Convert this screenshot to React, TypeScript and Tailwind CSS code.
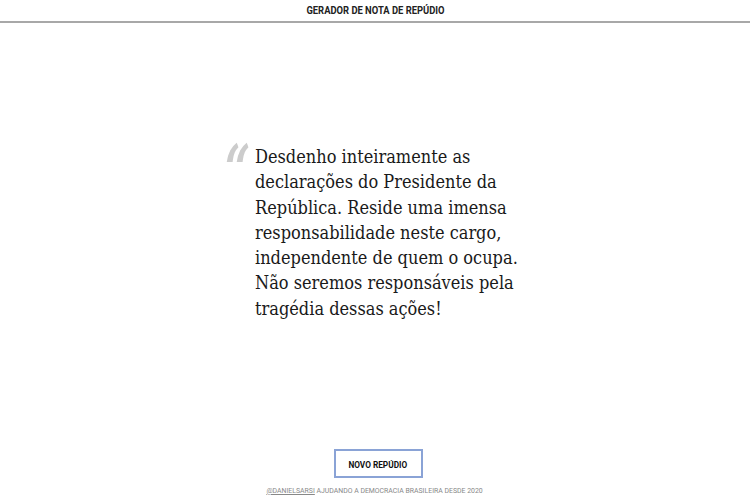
import React from "react";

const sans = { fontFamily: "Roboto, 'Liberation Sans', sans-serif" } as React.CSSProperties;
const serif = { fontFamily: "'DejaVu Serif Condensed', 'DejaVu Serif', serif", fontStretch: "semi-condensed" } as React.CSSProperties;
const quote = { fontFamily: "'DejaVu Serif', serif" } as React.CSSProperties;

export default function App() {
  return (
    <div className="w-[750px] h-[500px] bg-white flex flex-col" style={sans}>
      <header className="h-[23px] shrink-0 flex items-center justify-center border-b-2 border-[#a8a8a8]">
        <h1 className="inline-block scale-x-[0.94] text-[10px] font-bold text-[#222] leading-none pt-[1px]">GERADOR DE NOTA DE REPÚDIO</h1>
      </header>
      <main className="flex-1 flex items-start justify-center pt-[121px]">
        <div className="flex w-[302px]">
          <div className="w-[31px] shrink-0 relative">
            <span className="absolute left-[1px] top-[-8px] origin-top-left scale-x-[0.88] scale-y-[1.35] text-[#cccccc] text-[50px] leading-none font-bold italic" style={quote}>“</span>
          </div>
          <p className="w-[271px] text-[18px] leading-[25.3px] text-[#1a1a1a]" style={serif}>
            Desdenho inteiramente as declarações do Presidente da República. Reside uma imensa responsabilidade neste cargo, independente de quem o ocupa. Não seremos responsáveis pela tragédia dessas ações!
          </p>
        </div>
      </main>
      <div className="flex flex-col items-center shrink-0 pb-[6px]">
        <button className="w-[89px] h-[29px] border-2 border-[#8aa3d6] bg-white text-[#111] ml-[6px] -mt-[3px]">
          <span className="inline-block scale-x-[0.87] text-[9.5px] font-bold">NOVO REPÚDIO</span>
        </button>
        <p className="mt-[9px] text-[7.5px] text-[#888] leading-none scale-x-[0.92] inline-block">
          <span className="underline">@DANIELSARSI</span> AJUDANDO A DEMOCRACIA BRASILEIRA DESDE 2020
        </p>
      </div>
    </div>
  );
}
